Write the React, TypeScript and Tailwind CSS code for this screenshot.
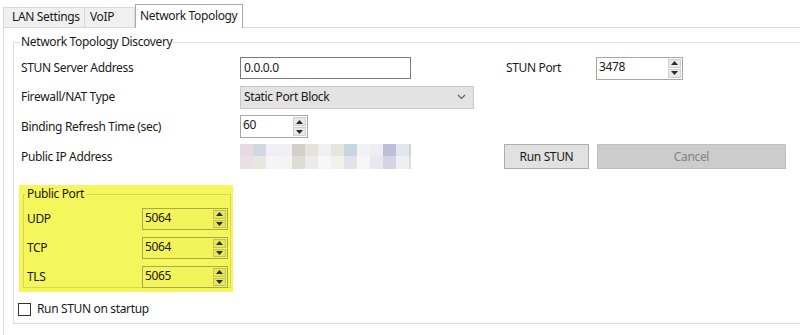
import React from "react";

const Arrow = ({ up }: { up?: boolean }) => (
  <svg width="7" height="4" viewBox="0 0 7 4">
    <path d={up ? "M0 4 L3.5 0 L7 4Z" : "M0 0 L3.5 4 L7 0Z"} fill="#2b2b2b" />
  </svg>
);

function Spin({ value, w, h, tint }: { value: string; w: string; h: string; tint?: boolean }) {
  return (
    <div
      className={
        tint
          ? `flex border border-[#a8a84c] bg-[#f3f35a] ${w} ${h}`
          : `flex border border-[#a6a6a6] bg-white ${w} ${h}`
      }
    >
      <div className="flex-1 pl-[2px] pt-[1px] leading-[16px] text-[#202020]">{value}</div>
      <div className="flex flex-col w-[15px] p-[1px] gap-[1px]">
        <div
          className={
            tint
              ? "flex-1 flex items-center justify-center bg-[#e6e658] border border-[#c4c452]"
              : "flex-1 flex items-center justify-center bg-[#e9e9e9] border border-[#cfcfcf]"
          }
        >
          <Arrow up />
        </div>
        <div
          className={
            tint
              ? "flex-1 flex items-center justify-center bg-[#e6e658] border border-[#c4c452]"
              : "flex-1 flex items-center justify-center bg-[#e9e9e9] border border-[#cfcfcf]"
          }
        >
          <Arrow />
        </div>
      </div>
    </div>
  );
}

const ipTop = [
  "#e6dbe2", "#d0d9df", "#efeff4", "#f0f0f4", "#d2cfca", "#e5e2da", "#f0f0f4",
  "#e7e4dc", "#c4d6e0", "#f2f2f2", "#efeff3", "#bebed9", "#e2e7ef", "#d3d3d3",
];
const ipBot = [
  "#e9e0e6", "#e7e7df", "#f5f5f8", "#f4f4f7", "#dfdbd5", "#ebebee", "#f7f7f7",
  "#f1f1ee", "#e3e1e9", "#f6f6f6", "#e9e9ed", "#d4d4e4", "#eeeef3", "#dedede",
];

export default function App() {
  return (
    <div className="w-[800px] h-[335px] overflow-hidden bg-white font-['Noto_Sans',sans-serif] text-[12px] tracking-[-0.35px] text-[#1a1a1a] whitespace-nowrap">
      {/* tab strip */}
      <div className="h-[27px] flex items-end pl-[3px] leading-[16px]">
        <div className="h-[20px] w-[82px] bg-[#f0f0f0] border border-b-0 border-[#d9d9d9] pl-[8px] pt-[1px]">
          LAN Settings
        </div>
        <div className="h-[20px] w-[50px] bg-[#f0f0f0] border border-b-0 border-l-0 border-[#d9d9d9] pl-[5px] pt-[1px]">
          VoIP
        </div>
        <div className="relative z-10 h-[24px] w-[108px] bg-white border border-b-0 border-[#a9a9a9] pl-[4px] pt-[3px] mb-[-1px]">
          Network Topology
        </div>
      </div>
      {/* tab panel */}
      <div className="ml-[3px] w-[830px] h-[310px] border-t border-l border-[#d9d9d9] pt-[6px]">
        <fieldset className="ml-[9px] border border-[#dcdcdc] p-0 m-0 pb-[6px]">
          <legend className="ml-[6px] px-[1px] leading-[16px]">Network Topology Discovery</legend>
          <div className="px-[7px] pt-[7px] flex flex-col">
            {/* row 1 */}
            <div className="flex items-center h-[22px]">
              <div className="w-[219px]">STUN Server Address</div>
              <div className="w-[171px] h-[22px] border border-[#7a7a7a] bg-white pl-[3px] leading-[20px] text-[#202020]">
                0.0.0.0
              </div>
              <div className="ml-[95px] w-[90px]">STUN Port</div>
              <Spin value="3478" w="w-[87px]" h="h-[23px]" />
            </div>
            {/* row 2 */}
            <div className="flex items-center h-[22px] mt-[7px]">
              <div className="w-[219px]">Firewall/NAT Type</div>
              <div className="w-[234px] h-[23px] border border-[#c9c9c9] bg-[#e3e3e3] pl-[3px] flex items-center justify-between pr-[7px]">
                <span>Static Port Block</span>
                <svg width="9" height="6" viewBox="0 0 9 6">
                  <polyline points="1,1 4.5,4.5 8,1" fill="none" stroke="#606060" strokeWidth="1.2" />
                </svg>
              </div>
            </div>
            {/* row 3 */}
            <div className="flex items-center h-[23px] mt-[7px]">
              <div className="w-[219px]">Binding Refresh Time (sec)</div>
              <Spin value="60" w="w-[68px]" h="h-[23px]" />
            </div>
            {/* row 4 */}
            <div className="flex items-center h-[25px] mt-[6px]">
              <div className="w-[219px]">Public IP Address</div>
              <div className="w-[171px] h-[25px] flex flex-col overflow-hidden">
                <div className="flex h-[12px]">
                  {ipTop.map((c, i) => (
                    <div key={i} className="w-[13px] h-full shrink-0" style={{ backgroundColor: c }} />
                  ))}
                </div>
                <div className="flex h-[13px]">
                  {ipBot.map((c, i) => (
                    <div key={i} className="w-[13px] h-full shrink-0" style={{ backgroundColor: c }} />
                  ))}
                </div>
              </div>
              <div className="ml-[93px] w-[85px] h-[25px] border border-[#adadad] bg-[#e1e1e1] flex items-center justify-center">
                Run STUN
              </div>
              <div className="ml-[8px] w-[189px] h-[25px] border border-[#bfbfbf] bg-[#cccccc] text-[#838383] flex items-center justify-center">
                Cancel
              </div>
            </div>
            {/* public port highlighted */}
            <div className="mt-[16px] -ml-[2px] w-[214px] h-[107px] bg-[#f5f55c] pl-[4px] pr-[2px] pt-[1px]">
              <fieldset className="border border-[#d8d852] p-0 m-0 h-[102px]">
                <legend className="ml-[1px] px-[2px] leading-[16px]">Public Port</legend>
                <div className="pl-[3px] pt-[6px] flex flex-col gap-[7px]">
                  {[
                    ["UDP", "5064"],
                    ["TCP", "5064"],
                    ["TLS", "5065"],
                  ].map(([l, v]) => (
                    <div key={l} className="flex items-center h-[22px]">
                      <div className="w-[115px]">{l}</div>
                      <Spin value={v} w="w-[86px]" h="h-[22px]" tint />
                    </div>
                  ))}
                </div>
              </fieldset>
            </div>
            {/* checkbox */}
            <div className="flex items-center h-[16px] mt-[9px] -ml-[3px]">
              <div className="w-[13px] h-[13px] border border-[#333333] bg-white" />
              <div className="ml-[6px]">Run STUN on startup</div>
            </div>
          </div>
        </fieldset>
      </div>
    </div>
  );
}
